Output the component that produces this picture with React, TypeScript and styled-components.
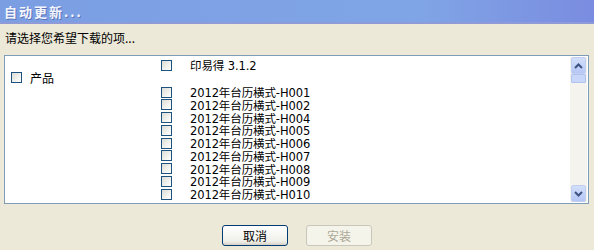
import styled, { createGlobalStyle } from 'styled-components';

const GlobalStyle = createGlobalStyle`
  html, body {
    margin: 0;
    padding: 0;
    background: #ece9d8;
  }
  body {
    font-family: Tahoma, "DejaVu Sans", "Noto Sans CJK SC", sans-serif;
    font-size: 12px;
    color: #000;
  }
`;

const Window = styled.div`
  width: 594px;
  height: 250px;
  display: flex;
  flex-direction: column;
  background: #ece9d8;
  overflow: hidden;
`;

const TitleBar = styled.div`
  height: 24px;
  box-sizing: border-box;
  display: flex;
  align-items: center;
  padding-left: 4px;
  background: linear-gradient(90deg, #7b9ee3 0%, #80a5e6 70%, #7a8ce0 100%);
  border-bottom: 2px solid #8f9ad8;
  color: #f4f6ff;
  font-family: "Noto Sans CJK SC", sans-serif;
  font-weight: bold;
  font-size: 13px;
  letter-spacing: 2px;
  text-shadow: 1px 1px 0 #5b74b8;
`;

const Prompt = styled.div`
  padding: 5px 0 0 5px;
  height: 27px;
  box-sizing: border-box;
  font-family: "Noto Sans CJK SC", sans-serif;
  font-size: 12px;
`;

const ListBox = styled.div`
  margin: 4px 5px 0 4px;
  height: 149px;
  box-sizing: border-box;
  border: 1px solid #7f9db9;
  background: #fff;
  display: flex;
`;

const ListContent = styled.div`
  flex: 1;
  display: grid;
  grid-template-columns: 156px 1fr;
  overflow: hidden;
`;

const Category = styled.div`
  display: flex;
  align-items: center;
  gap: 8px;
  padding: 15px 0 0 6px;
  height: 12px;
  font-family: "Noto Sans CJK SC", sans-serif;
`;

const Items = styled.div`
  display: flex;
  flex-direction: column;
  padding-top: 3px;
`;

const Item = styled.div<{ $gap?: number }>`
  display: flex;
  align-items: center;
  height: 12.75px;
  margin-bottom: ${p => p.$gap ?? 0}px;
  white-space: nowrap;
`;

const Box = styled.span`
  width: 11px;
  height: 11px;
  box-sizing: border-box;
  border: 1px solid #1c5180;
  background: linear-gradient(135deg, #dcdcd7 0%, #f2f2ee 60%, #fff 100%);
  flex: none;
`;

const Label = styled.span`
  margin-left: 18px;
  font-family: "DejaVu Sans", "Noto Sans CJK SC", sans-serif;
  font-size: 11.5px;
  letter-spacing: -0.1px;
`;

const Scrollbar = styled.div`
  width: 17px;
  margin: 1px 1px 1px 0;
  background: #f4f3ee;
  display: flex;
  flex-direction: column;
`;

const ArrowBtn = styled.div`
  height: 15px;
  margin: 0 1px;
  border-radius: 2px;
  background: linear-gradient(180deg, #d2defb, #b6c7f4);
  border: 1px solid #c0cef2;
  display: flex;
  align-items: center;
  justify-content: center;
`;

const Thumb = styled.div`
  height: 7px;
  margin: 0 1px;
  border-radius: 1px;
  background: #c8d6fa;
  border: 1px solid #b2c2ee;
`;

const Track = styled.div`
  flex: 1;
`;

const Footer = styled.div`
  flex: 1;
  display: flex;
  justify-content: center;
  align-items: flex-start;
  gap: 18px;
  padding-top: 21px;
`;

const Button = styled.button<{ $disabled?: boolean }>`
  width: 66px;
  height: 21px;
  padding: 0;
  border-radius: 3px;
  border: 1px solid ${p => (p.$disabled ? '#c9c7ba' : '#003c74')};
  background: ${p => (p.$disabled ? '#f5f4ea' : 'linear-gradient(180deg, #ffffff 0%, #f0f0ea 80%, #d6d0c5 100%)')};
  color: ${p => (p.$disabled ? '#aca899' : '#000')};
  font-family: "Noto Sans CJK SC", sans-serif;
  font-size: 12px;
`;

const Chevron = ({ up }: { up?: boolean }) => (
  <svg width="9" height="6" viewBox="0 0 9 6">
    <path
      d={up ? 'M1 5 L4.5 1.5 L8 5' : 'M1 1 L4.5 4.5 L8 1'}
      fill="none"
      stroke="#3e5383"
      strokeWidth="2"
    />
  </svg>
);

const codes = ['H001', 'H002', 'H004', 'H005', 'H006', 'H007', 'H008', 'H009', 'H010'];

export default function App() {
  return (
    <>
      <GlobalStyle />
      <Window>
        <TitleBar>自动更新...</TitleBar>
        <Prompt>请选择您希望下载的项...</Prompt>
        <ListBox>
          <ListContent>
            <div>
              <Category>
                <Box />
                <span>产品</span>
              </Category>
            </div>
            <Items>
              <Item $gap={14}>
                <Box />
                <Label>印易得 3.1.2</Label>
              </Item>
              {codes.map(c => (
                <Item key={c}>
                  <Box />
                  <Label>2012年台历横式-{c}</Label>
                </Item>
              ))}
            </Items>
          </ListContent>
          <Scrollbar>
            <ArrowBtn>
              <Chevron up />
            </ArrowBtn>
            <Thumb />
            <Track />
            <ArrowBtn>
              <Chevron />
            </ArrowBtn>
          </Scrollbar>
        </ListBox>
        <Footer>
          <Button>取消</Button>
          <Button $disabled>安装</Button>
        </Footer>
      </Window>
    </>
  );
}
